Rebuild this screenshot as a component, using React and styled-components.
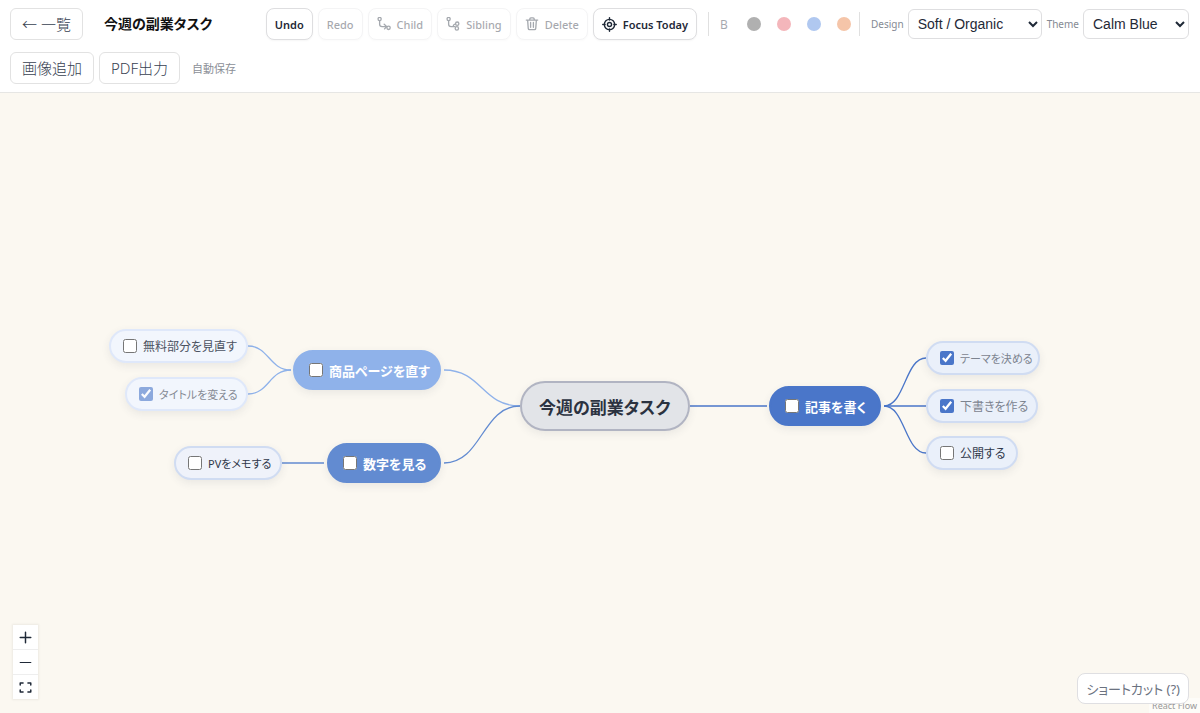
import React, { useState } from 'react';
import styled, { createGlobalStyle } from 'styled-components';

const GlobalStyle = createGlobalStyle`
  * {
    box-sizing: border-box;
  }

  body {
    margin: 0;
    font-family: 'Noto Sans', 'Noto Sans CJK JP', sans-serif;
    font-feature-settings: 'palt';
    color: #1f2937;
  }

  button,
  input {
    font-family: inherit;
    font-feature-settings: inherit;
  }
`;

const Page = styled.div`
  display: flex;
  flex-direction: column;
  height: 100vh;
`;

const Toolbar = styled.header`
  display: flex;
  flex-wrap: wrap;
  align-items: center;
  gap: 12px 5px;
  padding: 8px 11px 8px 10px;
  background: #fff;
  border-bottom: 1px solid #e6e6e4;
`;

const Title = styled.h1`
  flex: 1 0 150px;
  margin: 0;
  padding-left: 16px;
  font-size: 14px;
  line-height: 20px;
  font-weight: 600;
  color: #111;
  white-space: nowrap;
`;

const LargeButton = styled.button`
  height: 32px;
  padding: 0 11px;
  border: 1px solid #e2e2e2;
  border-radius: 6px;
  background: #fff;
  color: #374151;
  font-size: 15px;
  font-weight: 300;
  line-height: 20px;
  white-space: nowrap;
`;

const ToolButton = styled.button`
  display: flex;
  align-items: center;
  gap: 6px;
  height: 32px;
  padding: 0 8px;
  border: 1px solid #dedee0;
  border-radius: 8px;
  background: #fff;
  color: #1f2937;
  font-size: 11px;
  font-weight: 600;
  white-space: nowrap;
  box-shadow: 0 1px 2px rgba(0, 0, 0, 0.04);

  &:disabled {
    border-color: #e6e6e8;
    opacity: 0.4;
    font-weight: 500;
  }
`;

const Divider = styled.span`
  width: 1px;
  height: 24px;
  margin: 0 0 0 6px;
  background: #e0e0e0;

  &:last-child {
    margin: 0 6px 0 0;
  }
`;

const FormatGroup = styled.div`
  display: flex;
  align-items: center;
`;

const BoldButton = styled.button`
  width: 30px;
  height: 30px;
  padding: 0;
  border: 0;
  background: none;
  color: #1f2937;
  font-size: 12px;

  &:disabled {
    opacity: 0.4;
  }
`;

const Swatch = styled.button`
  display: grid;
  place-items: center;
  width: 30px;
  height: 30px;
  padding: 0;
  border: 0;
  background: none;

  &::before {
    content: '';
    width: 14px;
    height: 14px;
    border-radius: 50%;
    background: ${(props) => props.$color};
  }
`;

const SelectField = styled.div`
  display: flex;
  align-items: center;
  gap: 4px;

  label {
    color: #858a94;
    font-size: 10px;
  }

  select {
    width: ${(props) => props.$width}px;
    height: 30px;
    padding: 0 0 0 5px;
    border: 1px solid #dedee0;
    border-radius: 6px;
    background: #fff;
    color: #1f2937;
    font-family: 'Liberation Sans', Arial, sans-serif;
    font-size: 14px;
  }
`;

const SaveStatus = styled.span`
  margin-left: 7px;
  color: #8b8f97;
  font-size: 11px;
`;

const Canvas = styled.main`
  position: relative;
  flex: 1;
  min-height: 0;
  overflow: hidden;
  background: #fbf8f1;
`;

const Edges = styled.svg`
  position: absolute;
  inset: 0;
  width: 100%;
  height: 100%;
  fill: none;
`;

const kinds = {
  root: { height: 50, size: 17, weight: 600, padding: 17 },
  branch: { height: 40, size: 13, weight: 600, padding: 14 },
  leaf: { height: 34, size: 12, weight: 400, padding: 12 },
  compactLeaf: { height: 34, size: 11, weight: 400, padding: 12 },
};

const NodeBox = styled.label`
  position: absolute;
  left: ${(props) => props.$node.x}px;
  top: ${(props) => props.$node.y}px;
  width: ${(props) => props.$node.width}px;
  height: ${(props) => kinds[props.$node.kind].height}px;
  display: flex;
  align-items: center;
  gap: 6px;
  padding-left: ${(props) => kinds[props.$node.kind].padding}px;
  border: 2px solid ${(props) => props.$node.border || props.$node.fill};
  border-radius: 25px;
  background: ${(props) => props.$node.fill};
  color: ${(props) => props.$node.color};
  font-size: ${(props) => kinds[props.$node.kind].size}px;
  font-weight: ${(props) => kinds[props.$node.kind].weight};
  white-space: nowrap;
  box-shadow: 0 3px 9px rgba(60, 70, 90, 0.09);
`;

const Check = styled.input`
  flex: none;
  width: 14px;
  height: 14px;
  margin: 0;
  accent-color: #4a76c9;

  &:checked {
    opacity: ${(props) => (props.$faded ? 0.6 : 1)};
  }
`;

const Controls = styled.div`
  position: absolute;
  left: 13px;
  bottom: 14px;
  display: flex;
  flex-direction: column;
  box-shadow: 0 0 2px 1px rgba(0, 0, 0, 0.06);

  button {
    display: grid;
    place-items: center;
    width: 25px;
    height: 25px;
    padding: 0;
    border: 0;
    border-bottom: 1px solid #eee;
    background: #fff;
    color: #1f2937;
  }

  button:last-child {
    height: 24px;
    border-bottom: 0;
  }
`;

const Attribution = styled.a`
  position: absolute;
  right: 0;
  bottom: 0;
  padding: 0 3px;
  background: rgba(255, 255, 255, 0.5);
  color: #999;
  font-size: 9px;
  line-height: 15px;
  text-decoration: none;
`;

const ShortcutButton = styled.button`
  position: absolute;
  right: 11px;
  bottom: 9px;
  height: 31px;
  padding: 0 8px;
  border: 1px solid #dfdfe2;
  border-radius: 8px;
  background: #fff;
  color: #6b7280;
  font-size: 13px;
  white-space: nowrap;
`;

const light = { fill: '#f2f6fd', border: '#dfe8fa', faded: true };
const deep = { fill: '#eaf0fa', border: '#d0dcf2' };

const initialNodes = [
  { id: 'root', kind: 'root', text: '今週の副業タスク', x: 520, y: 288, width: 170, fill: '#e2e4e8', border: '#b1b4c2', color: '#2b3240' },
  { id: 'page', kind: 'branch', text: '商品ページを直す', x: 293, y: 257, width: 148, fill: '#8fb2ea', color: '#fff', done: false },
  { id: 'numbers', kind: 'branch', text: '数字を見る', x: 327, y: 350, width: 114, fill: '#628bd1', color: '#fff', done: false },
  { id: 'article', kind: 'branch', text: '記事を書く', x: 769, y: 293, width: 112, fill: '#4a76c9', color: '#fff', done: false },
  { id: 'free', kind: 'leaf', text: '無料部分を見直す', x: 109, y: 236, width: 139, ...light, color: '#4b5261', done: false },
  { id: 'rename', kind: 'compactLeaf', text: 'タイトルを変える', x: 125, y: 284, width: 123, ...light, color: '#858a94', done: true },
  { id: 'pv', kind: 'compactLeaf', text: 'PVをメモする', x: 174, y: 353, width: 108, ...deep, fill: '#eff2fa', color: '#30384a', done: false },
  { id: 'theme', kind: 'compactLeaf', text: 'テーマを決める', x: 926, y: 248, width: 114, ...deep, color: '#7d8490', done: true },
  { id: 'draft', kind: 'leaf', text: '下書きを作る', x: 926, y: 296, width: 112, ...deep, color: '#7d8490', done: true },
  { id: 'publish', kind: 'leaf', text: '公開する', x: 926, y: 343, width: 92, ...deep, color: '#30384a', done: false },
];

const edges = [
  { d: 'M444 277 C482 277 482 313 520 313', color: '#8fb2ea' },
  { d: 'M444 370 C482 370 482 313 520 313', color: '#628bd1' },
  { d: 'M248 253 C269 253 269 277 291 277', color: '#8fb2ea' },
  { d: 'M248 301 C269 301 269 277 291 277', color: '#8fb2ea' },
  { d: 'M282 370 H324', color: '#628bd1' },
  { d: 'M690 313 H767', color: '#4a76c9' },
  { d: 'M884 313 C905 313 905 265 926 265', color: '#4a76c9' },
  { d: 'M884 313 H926', color: '#4a76c9' },
  { d: 'M884 313 C905 313 905 360 926 360', color: '#4a76c9' },
];

const swatches = [
  ['Gray', '#b0b0b0'],
  ['Red', '#f4b6bb'],
  ['Blue', '#b0c8f0'],
  ['Orange', '#f5c5a9'],
];

const Icon = ({ size = 14, children }) => (
  <svg
    width={size}
    height={size}
    viewBox="0 0 16 16"
    fill="none"
    stroke="currentColor"
    strokeWidth="1.5"
    strokeLinecap="round"
    strokeLinejoin="round"
    aria-hidden="true"
  >
    {children}
  </svg>
);

const ChildIcon = () => (
  <Icon>
    <circle cx="3" cy="2.3" r="1.8" />
    <path d="M3 4.2v4.2q0 2.6 2.8 2.6h4.4M8.2 8.2l3 2.8-2.6 2.6" />
    <circle cx="13.2" cy="12.4" r="1.9" />
  </Icon>
);

const SiblingIcon = () => (
  <Icon>
    <circle cx="3" cy="2.3" r="1.8" />
    <path d="M3 4.2v4.2q0 2.6 2.8 2.6h4.4M8 11q.2-2.6 2.8-3.2" />
    <circle cx="12.8" cy="7.6" r="1.9" />
    <circle cx="12.4" cy="13" r="1.9" />
  </Icon>
);

const DeleteIcon = () => (
  <Icon>
    <path d="M1.5 3.5h13M5.5 3.5V2.2q0-1.2 1.2-1.2h2.6q1.2 0 1.2 1.2v1.3M3 3.5l.7 9.5q.1 1.5 1.5 1.5h5.6q1.4 0 1.5-1.5l.7-9.5M6.4 6.3v5.4M9.6 6.3v5.4" />
  </Icon>
);

const FocusIcon = () => (
  <Icon size={15}>
    <circle cx="8" cy="8" r="5.5" />
    <circle cx="8" cy="8" r="2.2" />
    <path d="M8 .8v2.5M8 12.7v2.5M.8 8h2.5M12.7 8h2.5" />
  </Icon>
);

const App = () => {
  const [nodes, setNodes] = useState(initialNodes);

  const toggle = (id) => {
    setNodes(nodes.map((n) => (n.id === id ? { ...n, done: !n.done } : n)));
  };

  return (
    <Page>
      <GlobalStyle />
      <Toolbar>
        <LargeButton>← 一覧</LargeButton>
        <Title>今週の副業タスク</Title>
        <ToolButton>Undo</ToolButton>
        <ToolButton disabled>Redo</ToolButton>
        <ToolButton disabled>
          <ChildIcon />
          Child
        </ToolButton>
        <ToolButton disabled>
          <SiblingIcon />
          Sibling
        </ToolButton>
        <ToolButton disabled>
          <DeleteIcon />
          Delete
        </ToolButton>
        <ToolButton>
          <FocusIcon />
          Focus Today
        </ToolButton>
        <FormatGroup>
          <Divider />
          <BoldButton disabled>B</BoldButton>
          {swatches.map(([name, color]) => (
            <Swatch key={name} $color={color} aria-label={name} disabled />
          ))}
          <Divider />
        </FormatGroup>
        <SelectField $width={134}>
          <label htmlFor="design">Design</label>
          <select id="design">
            <option>Soft / Organic</option>
          </select>
        </SelectField>
        <SelectField $width={106}>
          <label htmlFor="theme">Theme</label>
          <select id="theme">
            <option>Calm Blue</option>
          </select>
        </SelectField>
        <LargeButton>画像追加</LargeButton>
        <LargeButton>PDF出力</LargeButton>
        <SaveStatus>自動保存</SaveStatus>
      </Toolbar>

      <Canvas>
        <Edges>
          {edges.map((edge) => (
            <path key={edge.d} d={edge.d} stroke={edge.color} strokeWidth="1.3" />
          ))}
        </Edges>
        {nodes.map((node) => (
          <NodeBox key={node.id} $node={node} as={node.kind === 'root' ? 'div' : 'label'}>
            {node.kind !== 'root' && (
              <Check
                type="checkbox"
                $faded={node.faded}
                checked={node.done}
                onChange={() => toggle(node.id)}
              />
            )}
            <span>{node.text}</span>
          </NodeBox>
        ))}
        <Controls>
          <button aria-label="Zoom in">
            <Icon size={13}>
              <path d="M8 1.5v13M1.5 8h13" strokeWidth="1.8" />
            </Icon>
          </button>
          <button aria-label="Zoom out">
            <Icon size={13}>
              <path d="M1.5 8h13" />
            </Icon>
          </button>
          <button aria-label="Fit view">
            <Icon size={13}>
              <path
                d="M1.5 5V2.5h3.5M11 2.5h3.5V5M14.5 11v2.5H11M5 13.5H1.5V11"
                strokeWidth="1.8"
              />
            </Icon>
          </button>
        </Controls>
        <Attribution href="#">React Flow</Attribution>
        <ShortcutButton>ショートカット (?)</ShortcutButton>
      </Canvas>
    </Page>
  );
};

export default App;
